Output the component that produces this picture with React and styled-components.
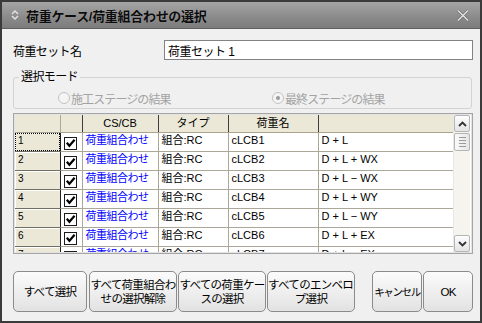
import React from "react";
import styled, { createGlobalStyle } from "styled-components";

const GlobalStyle = createGlobalStyle`
    html, body {
        margin: 0;
        padding: 0;
        background: #f0f0f0;
    }
    * {
        box-sizing: border-box;
    }
`;

const FONT = `"Liberation Sans", "Noto Sans CJK JP", sans-serif`;

const rows = [
    { no: 1, name: "cLCB1", formula: "D + L" },
    { no: 2, name: "cLCB2", formula: "D + L + WX" },
    { no: 3, name: "cLCB3", formula: "D + L − WX" },
    { no: 4, name: "cLCB4", formula: "D + L + WY" },
    { no: 5, name: "cLCB5", formula: "D + L − WY" },
    { no: 6, name: "cLCB6", formula: "D + L + EX" },
    { no: 7, name: "cLCB7", formula: "D + L − EX" },
];

const columns = [
    { key: "no", width: 45 },
    { key: "check", width: 22 },
    { key: "cs", width: 76, label: "CS/CB" },
    { key: "type", width: 70, label: "タイプ" },
    { key: "name", width: 90, label: "荷重名" },
    { key: "formula", width: 135, label: "" },
];

const SortIcon = () => (
    <svg width="8" height="12" viewBox="0 0 8 12">
        <path d="M1 5 L4 2 L7 5" fill="none" stroke="#e4e4e4" strokeWidth="1.4" />
        <path d="M1 7 L4 10 L7 7" fill="none" stroke="#e4e4e4" strokeWidth="1.4" />
    </svg>
);

const CloseIcon = () => (
    <svg width="14" height="13" viewBox="0 0 14 13">
        <path d="M2 1.5 L12 11.5 M12 1.5 L2 11.5" stroke="#6c6c6c" strokeWidth="2.6" />
        <path d="M2 1.5 L12 11.5 M12 1.5 L2 11.5" stroke="#e2e2e2" strokeWidth="1.5" />
    </svg>
);

const Chevron = ({ down }) => (
    <svg width="9" height="6" viewBox="0 0 9 6">
        <path
            d={down ? "M1 1 L4.5 4.5 L8 1" : "M1 5 L4.5 1.5 L8 5"}
            fill="none"
            stroke="#333"
            strokeWidth="1.8"
        />
    </svg>
);

const App = () => {
    return (
        <>
            <GlobalStyle />
            <Window>
                <TitleBar>
                    <SortIcon />
                    <Title>荷重ケース/荷重組合わせの選択</Title>
                    <CloseButton>
                        <CloseIcon />
                    </CloseButton>
                </TitleBar>
                <Body>
                    <NameRow>
                        <Label>荷重セット名</Label>
                        <TextField defaultValue="荷重セット 1" />
                    </NameRow>
                    <GroupBox>
                        <Legend>選択モード</Legend>
                        <RadioRow>
                            <RadioItem width="214px">
                                <Radio />
                                <RadioText>施工ステージの結果</RadioText>
                            </RadioItem>
                            <RadioItem>
                                <Radio checked />
                                <RadioText>最終ステージの結果</RadioText>
                            </RadioItem>
                        </RadioRow>
                    </GroupBox>
                    <Grid>
                        <TableArea>
                            <Table>
                                <colgroup>
                                    {columns.map((c) => (
                                        <col key={c.key} style={{ width: c.width }} />
                                    ))}
                                </colgroup>
                                <thead>
                                    <tr>
                                        {columns.map((c) => (
                                            <HeadCell key={c.key}>{c.label}</HeadCell>
                                        ))}
                                    </tr>
                                </thead>
                                <tbody>
                                    {rows.map((r) => (
                                        <tr key={r.no}>
                                            <RowHead>
                                                <RowNo focused={r.no === 1}>{r.no}</RowNo>
                                            </RowHead>
                                            <CheckCell>
                                                <CheckBox>
                                                    <svg width="11" height="11" viewBox="0 0 11 11">
                                                        <path
                                                            d="M1.8 4.8 L4.4 7.8 L9.6 1.8"
                                                            fill="none"
                                                            stroke="#000"
                                                            strokeWidth="2.2"
                                                        />
                                                    </svg>
                                                </CheckBox>
                                            </CheckCell>
                                            <Cell blue>荷重組合わせ</Cell>
                                            <Cell>組合:RC</Cell>
                                            <Cell>{r.name}</Cell>
                                            <Cell>{r.formula}</Cell>
                                        </tr>
                                    ))}
                                </tbody>
                            </Table>
                        </TableArea>
                        <ScrollBar>
                            <ScrollButton>
                                <Chevron />
                            </ScrollButton>
                            <Thumb>
                                <Grip />
                                <Grip />
                                <Grip />
                                <Grip />
                            </Thumb>
                            <Track />
                            <ScrollButton>
                                <Chevron down />
                            </ScrollButton>
                        </ScrollBar>
                    </Grid>
                    <ButtonRow>
                        <Button width="74px" gap="2px">すべて選択</Button>
                        <Button width="88px" gap="1px">
                            すべて荷重組合わ
                            <br />
                            せの選択解除
                        </Button>
                        <Button width="88px" gap="1px">
                            すべての荷重ケー
                            <br />
                            スの選択
                        </Button>
                        <Button width="88px" gap="17px">
                            すべてのエンベロッ
                            <br />
                            プ選択
                        </Button>
                        <Button width="50px" gap="1px" narrow>
                            キャンセル
                        </Button>
                        <Button width="50px">OK</Button>
                    </ButtonRow>
                </Body>
            </Window>
        </>
    );
};

const Window = styled.div`
    width: 482px;
    height: 323px;
    border: 2px solid #3b3b3b;
    background: #f0f0f0;
    display: flex;
    flex-direction: column;
    font-family: ${FONT};
    overflow: hidden;
`;
const TitleBar = styled.div`
    height: 27px;
    flex: 0 0 27px;
    display: flex;
    align-items: center;
    padding: 0 8px 0 9px;
    background: linear-gradient(#a6a6a6, #8c8c8c 55%, #7c7c7c);
    border-bottom: 1px solid #5e5e5e;
`;
const Title = styled.div`
    flex: 1;
    margin-left: 7px;
    font-size: 13px;
    font-weight: bold;
    color: #0c0c0c;
    letter-spacing: -0.3px;
    text-shadow: 0 0 1px rgba(255, 255, 255, 0.3);
`;
const CloseButton = styled.div`
    display: flex;
    align-items: center;
    padding-right: 2px;
`;
const Body = styled.div`
    flex: 1;
    display: flex;
    flex-direction: column;
    padding: 0 7px 0 11px;
`;
const NameRow = styled.div`
    display: flex;
    align-items: center;
    margin-top: 11px;
    height: 20px;
`;
const Label = styled.div`
    flex: 0 0 151px;
    font-size: 12px;
    color: #000;
    letter-spacing: -0.6px;
`;
const TextField = styled.input`
    flex: 1;
    height: 20px;
    border: 1px solid #828282;
    background: #fff;
    font-family: ${FONT};
    font-size: 12px;
    letter-spacing: -0.5px;
    padding: 0 3px;
    color: #000;
    outline: none;
`;
const GroupBox = styled.fieldset`
    margin: 10px 1px 0 0;
    padding: 0;
    min-width: 0;
    height: 39px;
    border: 1px solid #d3d3d3;
    border-radius: 3px;
`;
const Legend = styled.legend`
    margin-left: 5px;
    padding: 0 2px;
    font-size: 12px;
    line-height: 14px;
    color: #000;
    letter-spacing: -0.6px;
`;
const RadioRow = styled.div`
    display: flex;
    align-items: center;
    height: 28px;
    padding-left: 44px;
`;
const RadioItem = styled.div`
    display: flex;
    align-items: center;
    width: ${(props) => props.width || "auto"};
`;
const Radio = styled.span`
    width: 12px;
    height: 12px;
    border-radius: 50%;
    border: 1px solid #c2c2c2;
    background: #f4f4f4;
    display: flex;
    align-items: center;
    justify-content: center;
    &::after {
        content: "";
        display: ${(props) => (props.checked ? "block" : "none")};
        width: 4px;
        height: 4px;
        border-radius: 50%;
        background: #9a9a9a;
    }
`;
const RadioText = styled.span`
    margin-left: 1px;
    font-size: 12px;
    color: #a3a3a3;
    letter-spacing: -0.9px;
`;
const Grid = styled.div`
    margin-top: 4px;
    height: 141px;
    display: flex;
    border: 1px solid #a5a5a5;
    outline: 1px solid #e3e3e3;
    outline-offset: -2px;
    padding: 1px;
    background: #fff;
    overflow: hidden;
`;
const TableArea = styled.div`
    flex: 0 0 438px;
    overflow: hidden;
    background: #fff;
`;
const Table = styled.table`
    border-collapse: collapse;
    table-layout: fixed;
    width: 438px;
    font-family: ${FONT};
`;
const HeadCell = styled.th`
    height: 17px;
    padding: 0;
    background: #ebe8d7;
    border-right: 1px solid #3e3e3e;
    border-bottom: 1px solid #a8a48f;
    font-size: 11px;
    font-weight: normal;
    color: #000;
    text-align: center;
    vertical-align: middle;
    line-height: 15px;
    &:first-child {
        border-right-color: #aca899;
    }
`;
const RowHead = styled.td`
    height: 19px;
    padding: 0;
    background: #ebe8d7;
    border-right: 1px solid #222;
    border-bottom: 1px solid #716f64;
    vertical-align: top;
    box-shadow: inset 1px 1px 0 #fff;
`;
const RowNo = styled.div`
    height: 18px;
    font-size: 10px;
    line-height: 11px;
    padding: 1px 0 0 2px;
    color: #000;
    border: 1px ${(props) => (props.focused ? "dotted #000" : "solid transparent")};
`;
const CheckCell = styled.td`
    padding: 0 0 1px 3px;
    border-bottom: 1px solid #aca899;
    border-right: 1px solid #aca899;
    vertical-align: bottom;
    background: #fff;
`;
const CheckBox = styled.div`
    width: 13px;
    height: 13px;
    border: 1px solid #1c1c1c;
    background: #fff;
    display: flex;
    align-items: center;
    justify-content: center;
`;
const Cell = styled.td`
    padding: 1px 0 0 3px;
    border-bottom: 1px solid #aca899;
    border-right: 1px solid #aca899;
    vertical-align: top;
    white-space: nowrap;
    overflow: hidden;
    font-size: 11px;
    line-height: 13px;
    color: ${(props) => (props.blue ? "#0000ff" : "#000")};
    letter-spacing: ${(props) => (props.blue ? "-0.5px" : "0")};
    background: #fff;
`;
const ScrollBar = styled.div`
    flex: 0 0 17px;
    display: flex;
    flex-direction: column;
    background: #f5f4ef;
    border-left: 1px solid #e8e8e8;
`;
const ScrollButton = styled.div`
    height: 17px;
    flex: 0 0 17px;
    display: flex;
    align-items: center;
    justify-content: center;
    border: 1px solid #b5b5b5;
    border-radius: 2px;
    background: linear-gradient(#fdfdfd, #e4e4e4);
`;
const Thumb = styled.div`
    margin-top: 1px;
    height: 18px;
    flex: 0 0 18px;
    display: flex;
    flex-direction: column;
    align-items: center;
    justify-content: center;
    gap: 2px;
    border: 1px solid #b5b5b5;
    border-radius: 2px;
    background: linear-gradient(90deg, #fafafa, #e6e6e6);
`;
const Grip = styled.div`
    width: 7px;
    height: 1px;
    background: #9a9a9a;
`;
const Track = styled.div`
    flex: 1;
`;
const ButtonRow = styled.div`
    display: flex;
    margin-top: 17px;
`;
const Button = styled.button`
    width: ${(props) => props.width};
    height: 41px;
    margin-right: ${(props) => props.gap || "0"};
    padding: 0;
    border: 1px solid #8b8b8b;
    border-radius: 5px;
    background: linear-gradient(#fbfbfb, #efefef 50%, #e2e2e2);
    font-family: ${FONT};
    font-size: ${(props) => (props.narrow ? "10.5px" : "11.5px")};
    line-height: 14px;
    letter-spacing: ${(props) => (props.narrow ? "-1.4px" : "-0.7px")};
    color: #000;
    white-space: nowrap;
    overflow: hidden;
    text-align: center;
`;

export default App;
